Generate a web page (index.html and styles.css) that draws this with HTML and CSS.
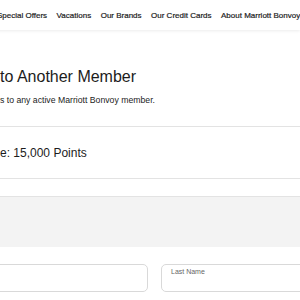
FILE: index.html
```html
<!doctype html>
<html>
<head>
<meta charset="utf-8">
<title>Transfer Points</title>
<link rel="stylesheet" href="styles.css">
</head>
<body>
<div class="nav">
	<a href="javascript:;">Special Offers</a>
	<a href="javascript:;">Vacations</a>
	<a href="javascript:;">Our Brands</a>
	<a href="javascript:;">Our Credit Cards</a>
	<a href="javascript:;">About Marriott Bonvoy</a>
</div>
<div class="main">
	<h1 class="title">to Another Member</h1>
	<p class="sub">s to any active Marriott Bonvoy member.</p>
	<div class="balance">e: 15,000 Points</div>
	<div class="notice"></div>
	<div class="form">
		<div class="field first"></div>
		<div class="field"><label>Last Name</label></div>
	</div>
</div>
</body>
</html>
```

FILE: styles.css
```css
*{ margin:0; padding:0; box-sizing:border-box;}
body{ font-family:"Liberation Sans",Arial,sans-serif; color:#1c1c1c; background:#fff; overflow:hidden;}

.nav{ height:30px; margin-left:-3px; display:flex; align-items:center; gap:9.5px; white-space:nowrap; box-shadow:0 1px 3px rgba(0,0,0,0.08);}
.nav a{ font-size:8px; color:#1c1c1c; text-decoration:none; -webkit-text-stroke:0.2px #1c1c1c;}

.main{ padding-top:37px;}
.title{ font-size:16px; line-height:20px; font-weight:normal; white-space:nowrap;}
.sub{ font-size:8.7px; line-height:12px; margin-top:7px; white-space:nowrap;}

.balance{ margin-top:20px; height:53px; border-top:1px solid #e3e3e3; border-bottom:1px solid #e3e3e3; display:flex; align-items:center; font-size:12px; white-space:nowrap;}

.notice{ margin-top:17px; height:51px; border-top:1px solid #e3e3e3; background:#f3f3f3;}

.form{ margin-top:17px; display:flex; gap:13px; margin-left:-100px; white-space:nowrap;}
.field{ flex:none; width:200px; height:28px; border:1px solid #d9d9d9; border-radius:5px; padding:3px 9px;}
.field.first{ width:248px;}
.field label{ display:block; font-size:7px; line-height:8px; color:#666;}
```
